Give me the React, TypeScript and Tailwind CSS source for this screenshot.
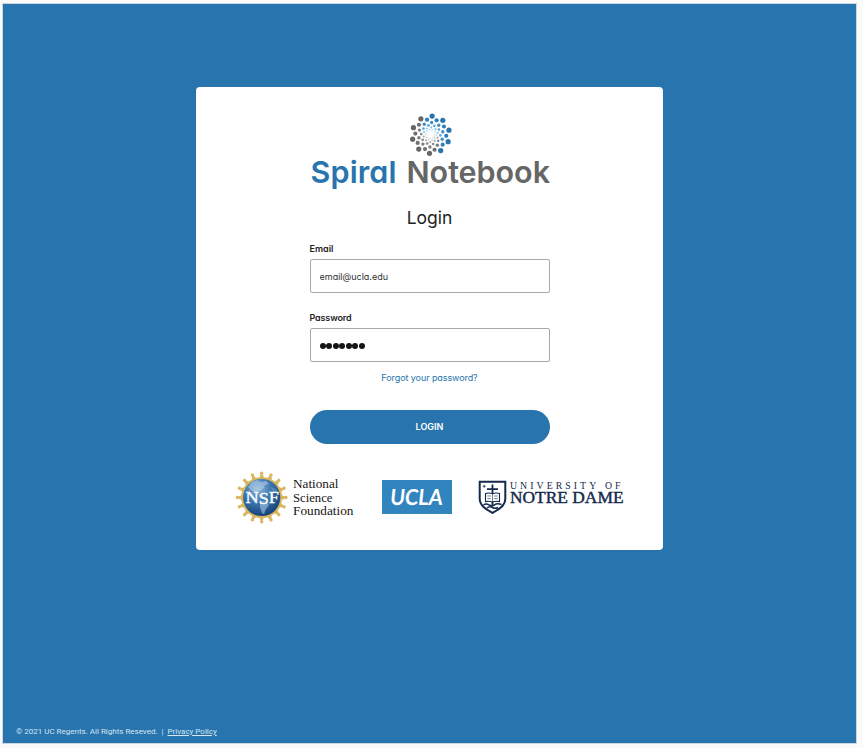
import React from "react";

const sans = "font-['Inter','Open_Sans',sans-serif] [font-feature-settings:'cv11']";

// Ten-armed spiral; every ring shrinks and turns by half a step.
function SpiralMark() {
  const dots: React.ReactElement[] = [];
  const blues = ["#2774ae", "#2f7fbb", "#3f8fca", "#5aa6da", "#82c1e8", "#a9d8f2", "#c6e6f7"];
  const grays = ["#666666", "#707070", "#7c7c7c", "#8c8c8c", "#a6a6a6", "#bdbdbd", "#d2d2d2"];
  const radii = [18.7, 15.5, 12.3, 9.6, 7.3, 5.4, 3.8];
  const sizes = [2.6, 2.1, 1.7, 1.35, 1.05, 0.8, 0.6];
  for (let ring = 0; ring < 7; ring++) {
    for (let k = 0; k < 10; k++) {
      const deg = -86 + k * 36 - ring * 18;
      const a = (deg * Math.PI) / 180;
      dots.push(
        <circle
          key={`${ring}-${k}`}
          cx={22.8 + radii[ring] * Math.cos(a)}
          cy={22.7 + radii[ring] * Math.sin(a)}
          r={sizes[ring]}
          fill={k < 5 ? blues[ring] : grays[ring]}
        />
      );
    }
  }
  return (
    <svg width="44" height="44" viewBox="0 0 44 44" className="overflow-visible" aria-hidden="true">
      {dots}
    </svg>
  );
}

function NsfLogo() {
  const rays = Array.from({ length: 16 }, (_, i) => i * 22.5);
  return (
    <svg width="120" height="54" viewBox="0 0 120 54" className="overflow-visible">
      <defs>
        <radialGradient id="globe" cx="0.4" cy="0.28" r="0.75">
          <stop offset="0" stopColor="#8fb4d8" />
          <stop offset="0.45" stopColor="#3f7ab3" />
          <stop offset="1" stopColor="#123f75" />
        </radialGradient>
      </defs>
      {rays.map((r) => (
        <g key={r} transform={`rotate(${r} 26.7 27.5)`} fill="#d9b65e">
          <path d="M22.500 8.500 Q25.300 7.500 25.300 4.500 H28.100 Q28.100 7.500 30.900 8.500 Z" />
          <circle cx="26.700" cy="3.300" r="1.700" />
        </g>
      ))}
      <circle cx="26.700" cy="27.500" r="20.500" fill="#d9b65e" />
      <circle cx="26.700" cy="27.500" r="18.600" fill="url(#globe)" />
      <path d="M13 17 L17 12 L22 10 L26 12 L31 11 L34 14 L30 15 L29 18 L25 21 L21 21 L24 25 L20 23 L16 20 Z" fill="#b7d1e8" opacity=".55" />
      <path d="M25 31 L30 31 L34 35 L31 39 L29 44 L27 43 L25 37 Z" fill="#a5c6e2" opacity=".6" />
      <path d="M36 17 L41 19 L43 24 L38 22 Z" fill="#8fb7da" opacity=".35" />
      <text x="10.500" y="32.500" textLength="33.500" lengthAdjust="spacingAndGlyphs" fill="#fff" stroke="#fff" strokeWidth=".35" fontSize="17.500" className="font-['Liberation_Serif',serif]">
        N<tspan dy="1">S</tspan><tspan dy="-.5">F</tspan>
      </text>
      <g fill="#151515" fontSize="12.500" className="font-['Liberation_Serif',serif]">
        <text x="58" y="18" textLength="45.500" lengthAdjust="spacingAndGlyphs">National</text>
        <text x="58" y="31.500" textLength="39.500" lengthAdjust="spacingAndGlyphs">Science</text>
        <text x="58" y="45" textLength="60.500" lengthAdjust="spacingAndGlyphs">Foundation</text>
      </g>
    </svg>
  );
}

function UclaLogo() {
  return (
    <svg width="70" height="34" viewBox="0 0 70 34">
      <rect width="70" height="34" fill="#3284bf" />
      <text x="7.500" y="25" textLength="52.500" lengthAdjust="spacingAndGlyphs" transform="translate(2.600 0) skewX(-6)" fill="#fff" fontSize="22" fontWeight="700" className="font-['Lato',sans-serif]">UCLA</text>
    </svg>
  );
}

function NotreDameLogo() {
  return (
    <svg width="146" height="35" viewBox="0 0 146 35" fill="#14294b" className="overflow-visible">
      <path d="M1.700 1.700 H27.300 V18.500 C27.300 26 20.500 29.500 14.500 32.800 C8.500 29.500 1.700 26 1.700 18.500 Z" fill="#fff" stroke="#14294b" strokeWidth="2" />
      <path d="M13.600 4.500 H15.400 V8.200 H20 V10 H15.400 V25 H13.600 V10 H9 V8.200 H13.600 Z" />
      <path d="M7.500 13.500 Q11 12.300 14.500 13.800 Q18 12.300 21.500 13.500 V21.600 Q18 20.600 14.500 22 Q11 20.600 7.500 21.600 Z" fill="#fff" stroke="#14294b" strokeWidth="1.100" />
      <path d="M14.500 13.800 V22 M9.300 16 H12.800 M16.200 16 H19.700 M9.300 18.600 H12.800 M16.200 18.600 H19.700" stroke="#14294b" strokeWidth=".6" />
      <path d="M5.500 25 Q8 23 11 24.800 T16.500 24.800 T23.500 24.500 M9 28 Q12 26 14.500 27.500 T20 27.500" fill="none" stroke="#14294b" strokeWidth="1.500" />
      <path d="M6.200 4.800 V7.800 M4.700 6.300 H7.700" stroke="#14294b" strokeWidth=".8" />
      <text x="32" y="8.500" fontSize="9.800" letterSpacing="3.050" className="font-['Liberation_Serif',serif]">UNIVERSITY</text>
      <text x="127" y="8.500" fontSize="9.800" letterSpacing="3" className="font-['Liberation_Serif',serif]">OF</text>
      <text x="32" y="22.600" textLength="113.500" lengthAdjust="spacingAndGlyphs" fontSize="16" stroke="#14294b" strokeWidth=".4" className="font-['Liberation_Serif',serif]">NOTRE DAME</text>
    </svg>
  );
}

export default function App() {
  return (
    <div className={`h-[748px] w-[863px] bg-[#fafafa] pt-[3px] pl-[2px] ${sans}`}>
      <div className="flex h-[741px] w-[855px] flex-col items-center justify-between border border-[#c9d5df] bg-[#2774ae]">
        <main className="mt-[83px] flex h-[463px] w-[467px] flex-col items-center rounded-[4px] bg-white pt-[25px]">
          <SpiralMark />
          <h1 className="mt-[-3px] h-[40px] font-semibold">
            <svg width="242" height="40" viewBox="0 0 242 40" fontSize="30.500" className="overflow-visible">
              <text x="1.500" y="30" textLength="86" fill="#2774ae">Spiral</text>
              <text x="97.500" y="30" textLength="143.500" fill="#666">Notebook</text>
            </svg>
          </h1>
          <h2 className="mt-[13px] text-[17.500px] leading-[24px] text-[#222]">Login</h2>
          <form className="mt-[12px] flex w-[240px] flex-col" onSubmit={(e) => e.preventDefault()}>
            <label htmlFor="email" className="h-[17px] text-[9px] font-semibold leading-[14px] text-[#222]">Email</label>
            <input
              id="email"
              defaultValue="email@ucla.edu"
              className="h-[34px] rounded-[2px] border border-[#a9a9a9] bg-white px-[9px] text-[9px] text-[#333] outline-none"
            />
            <label htmlFor="password" className="mt-[18px] h-[17px] text-[9px] font-semibold leading-[14px] tracking-[-0.15px] text-[#222]">Password</label>
            <div id="password" className="flex h-[34px] items-center gap-[0.500px] rounded-[2px] border border-[#a9a9a9] px-[9px] pt-[1px]">
              {Array.from({ length: 7 }, (_, i) => (
                <span key={i} className="size-[6px] rounded-full bg-[#151515]" />
              ))}
            </div>
            <a href="#forgot" className="mt-[9px] self-center text-[9px] leading-[14px] tracking-[-0.08px] text-[#2774ae]">Forgot your password?</a>
            <button type="submit" className="mt-[25px] h-[34px] rounded-full bg-[#2774ae] text-[9px] font-semibold text-white">LOGIN</button>
          </form>
          <div className="mt-[26px] flex w-full items-center pl-[39px]">
            <NsfLogo />
            <div className="ml-[27px]"><UclaLogo /></div>
            <div className="ml-[26px]"><NotreDameLogo /></div>
          </div>
        </main>
        <footer className="mb-[5px] flex w-full pl-[13px] font-['Roboto',sans-serif] text-[8px] leading-[12px] text-[#d5e5f1]">
          <span>© 2021 UC Regents. All Rights Reseved.</span>
          <span className="mx-[4px]">|</span>
          <a href="#privacy" className="underline">Privacy Policy</a>
        </footer>
      </div>
    </div>
  );
}
